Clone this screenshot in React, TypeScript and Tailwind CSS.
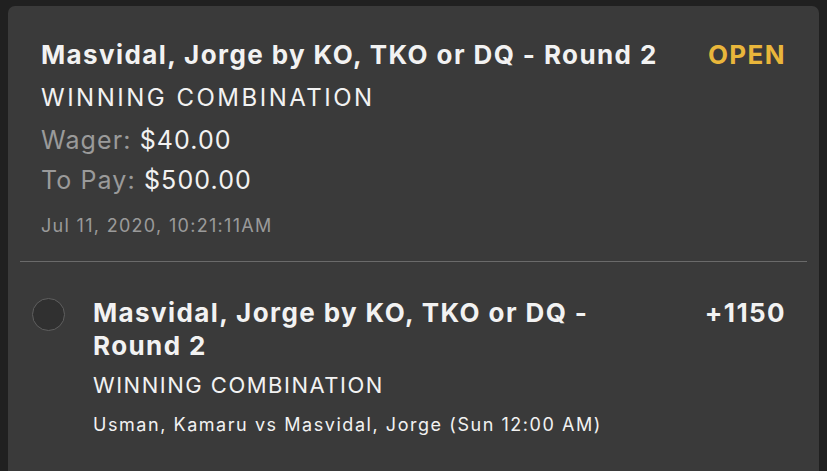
export default function App() {
  return (
    <div className="h-[471px] w-[827px] overflow-hidden bg-[#202020] px-2 pt-[6px] font-['Inter',sans-serif]">
      <div className="h-[500px] rounded-t-[7px] bg-[#3a3a3a] px-3">
        <div className="px-[21px] pt-[32px] pb-[23px]">
          <div className="flex items-start justify-between">
            <h2 className="text-[26px] font-bold leading-[34px] tracking-[1.4px] text-[#f2f2f2]">
              Masvidal, Jorge by KO, TKO or DQ - Round 2
            </h2>
            <span className="text-[26px] font-bold leading-[34px] tracking-[1.4px] text-[#e9b63b]">OPEN</span>
          </div>
          <p className="mt-[9px] text-[24px] leading-[34px] tracking-[2.5px] text-[#f2f2f2]">WINNING COMBINATION</p>
          <p className="mt-[8px] text-[25px] leading-[34px] tracking-[1.1px]">
            <span className="text-[#9a9a9a]">Wager:</span> <span className="text-[#f2f2f2]">$40.00</span>
          </p>
          <p className="mt-[6px] text-[25px] leading-[34px] tracking-[1.1px]">
            <span className="text-[#9a9a9a]">To Pay:</span> <span className="text-[#f2f2f2]">$500.00</span>
          </p>
          <p className="mt-[17px] text-[18px] leading-[24px] tracking-[1.3px] text-[#9a9a9a]">Jul 11, 2020, 10:21:11AM</p>
        </div>
        <div className="h-px bg-[#6a6a6a]" />
        <div className="flex gap-[28px] pt-[34px] pl-[12px] pr-[21px]">
          <div className="mt-[2px] h-[33px] w-[33px] shrink-0 rounded-full border-[1.5px] border-[#5f5f5f] bg-[#303030]" />
          <div className="flex-1">
            <div className="flex items-start justify-between">
              <h3 className="w-[540px] text-[26px] font-bold leading-[33px] tracking-[1.4px] text-[#f2f2f2]">
                Masvidal, Jorge by KO, TKO or DQ - Round 2
              </h3>
              <span className="text-[26px] font-bold leading-[33px] tracking-[1.4px] text-[#f2f2f2]">+1150</span>
            </div>
            <p className="mt-[8px] text-[22px] leading-[30px] tracking-[1.5px] text-[#f2f2f2]">WINNING COMBINATION</p>
            <p className="mt-[13px] text-[18px] leading-[24px] tracking-[1.55px] text-[#f2f2f2]">
              Usman, Kamaru vs Masvidal, Jorge (Sun 12:00 AM)
            </p>
          </div>
        </div>
      </div>
    </div>
  );
}
